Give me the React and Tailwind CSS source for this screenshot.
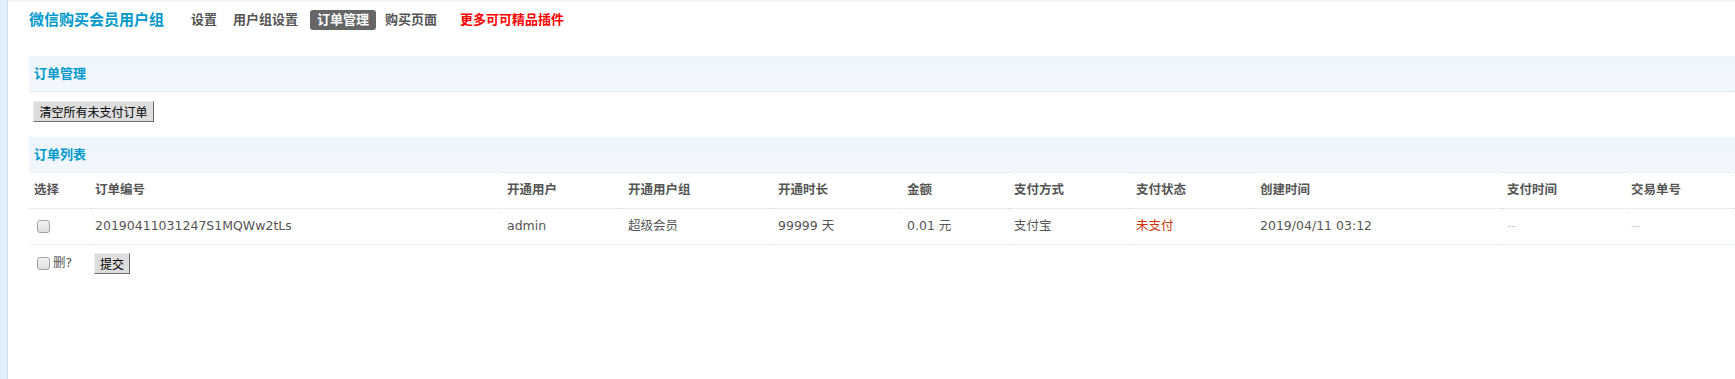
import React from "react";

const cols = [
  { label: "选择", w: "w-[61px]", solid: false },
  { label: "订单编号", w: "w-[412px]", solid: false },
  { label: "开通用户", w: "w-[121px]", solid: true },
  { label: "开通用户组", w: "w-[150px]", solid: true },
  { label: "开通时长", w: "w-[129px]", solid: true },
  { label: "金额", w: "w-[107px]", solid: true },
  { label: "支付方式", w: "w-[122px]", solid: false },
  { label: "支付状态", w: "w-[124px]", solid: true },
  { label: "创建时间", w: "w-[247px]", solid: false },
  { label: "支付时间", w: "w-[124px]", solid: true },
  { label: "交易单号", w: "flex-1", solid: false },
];

function Checkbox() {
  return (
    <span className="inline-block w-[13px] h-[13px] rounded-[3px] border border-[#a3a3a3] bg-gradient-to-b from-[#f4f4f4] to-[#dedede]" />
  );
}

function OldButton({ children, className = "" }) {
  return (
    <button
      className={
        "h-[21px] px-[4px] text-[12px] leading-none text-black bg-[#dddddd] border border-t-[#ececec] border-l-[#ececec] border-r-[#6a6a6a] border-b-[#6a6a6a] font-['Noto_Sans_CJK_SC',sans-serif] " +
        className
      }
    >
      {children}
    </button>
  );
}

function Band({ title }) {
  return (
    <div className="h-[36px] flex items-center pl-[5px] bg-gradient-to-b from-[#edf5fc] to-[#f3f8fd] border-b border-dotted border-[#cfe3f4]">
      <span className="text-[13px] font-bold text-[#0099cc]">{title}</span>
    </div>
  );
}

export default function App() {
  const row = [
    <Checkbox key="c" />,
    "20190411031247S1MQWw2tLs",
    "admin",
    "超级会员",
    "99999 天",
    "0.01 元",
    "支付宝",
    <span key="s" className="text-[#cc3300]">未支付</span>,
    "2019/04/11 03:12",
    <span key="p" className="text-[#cccccc]">--</span>,
    <span key="t" className="text-[#cccccc]">--</span>,
  ];

  return (
    <div className="min-h-screen flex bg-white font-['DejaVu_Sans','Noto_Sans_CJK_SC',sans-serif]">
      <div className="w-[7px] shrink-0 bg-[#e2eef8] border-r border-[#cadef0] box-content" />
      <div className="flex-1 flex flex-col">
        <div className="h-[4px] bg-gradient-to-b from-[#f0f5fa] to-white" />
        <div className="pl-[21px]">
          {/* top nav */}
          <div className="h-[36px] flex items-center">
            <span className="text-[15px] font-bold text-[#0099cc] mt-[-4px]">微信购买会员用户组</span>
            <div className="flex items-center text-[13px] font-bold text-[#555] mt-[-4px]">
              <span className="ml-[27px]">设置</span>
              <span className="ml-[16px]">用户组设置</span>
              <span className="ml-[12px] px-[7px] h-[20px] flex items-center rounded-[3px] bg-[#666] text-white">订单管理</span>
              <span className="ml-[9px]">购买页面</span>
              <span className="ml-[23px] text-[#ff0000]">更多可可精品插件</span>
            </div>
          </div>

          <div className="mt-[16px]">
            <Band title="订单管理" />
          </div>
          <div className="mt-[9px] pl-[4px] flex">
            <OldButton className="w-[121px]">清空所有未支付订单</OldButton>
          </div>

          <div className="mt-[15px] h-[35px] flex items-center pl-[5px] bg-gradient-to-b from-[#edf5fc] to-[#f3f8fd]">
            <span className="text-[13px] font-bold text-[#0099cc]">订单列表</span>
          </div>

          {/* table */}
          <div className="text-[12.5px] text-[#555]">
            <div className="flex">
              {cols.map((c) => (
                <div
                  key={c.label}
                  className={
                    c.w +
                    " h-[36px] flex items-center pl-[5px] font-bold border-t border-[#d5eafa] " +
                    (c.solid ? "border-solid" : "border-dotted border-[#c9e0f3]")
                  }
                >
                  {c.label}
                </div>
              ))}
            </div>
            <div className="flex">
              {cols.map((c, i) => (
                <div
                  key={c.label}
                  className={
                    c.w +
                    " h-[37px] flex items-center border-t border-dotted border-t-[#c9e0f3] border-b border-b-[#d5eafa] " +
                    (i === 0 ? "pl-[8px] " : "pl-[5px] ") +
                    (c.solid ? "border-b-solid" : "border-b-dotted")
                  }
                >
                  {row[i]}
                </div>
              ))}
            </div>
            <div className="h-[37px] flex items-center">
              <div className="w-[61px] pl-[8px] flex items-center gap-[3px]">
                <Checkbox />
                <span>删?</span>
              </div>
              <div className="pl-[4px] flex">
                <OldButton className="h-[20px] w-[36px]">提交</OldButton>
              </div>
            </div>
          </div>
        </div>
      </div>
    </div>
  );
}
